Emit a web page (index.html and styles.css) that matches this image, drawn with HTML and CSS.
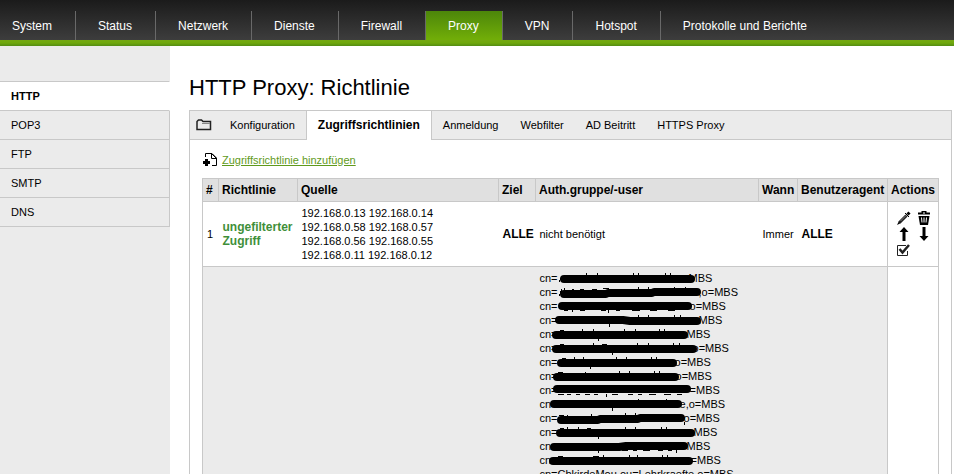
FILE: index.html
```html
<!DOCTYPE html>
<html lang="de">
<head>
    <meta charset="UTF-8">
    <title>HTTP Proxy: Richtlinie</title>
    <link rel="stylesheet" href="styles.css">
</head>
<body>
    <nav class="topnav">
        <a href="#">System</a>
        <a href="#">Status</a>
        <a href="#">Netzwerk</a>
        <a href="#">Dienste</a>
        <a href="#">Firewall</a>
        <a href="#" class="active">Proxy</a>
        <a href="#">VPN</a>
        <a href="#">Hotspot</a>
        <a href="#">Protokolle und Berichte</a>
    </nav>

    <div class="page">
        <nav class="sidebar">
            <a href="#" class="active">HTTP</a>
            <a href="#">POP3</a>
            <a href="#">FTP</a>
            <a href="#">SMTP</a>
            <a href="#">DNS</a>
        </nav>

        <main class="content">
            <h1>HTTP Proxy: Richtlinie</h1>

            <div class="tabs">
                <svg class="folder" width="16" height="12" viewBox="0 0 16 12"><path d="M1 10.500V2.500L2.500 1h3L7 2.500h7.500v8z" fill="none" stroke="#222" stroke-width="1.500"/><path d="M6 4.500h8" stroke="#888"/></svg>
                <a href="#">Konfiguration</a>
                <a href="#" class="active">Zugriffsrichtlinien</a>
                <a href="#">Anmeldung</a>
                <a href="#">Webfilter</a>
                <a href="#">AD Beitritt</a>
                <a href="#">HTTPS Proxy</a>
            </div>

            <div class="panel">
                <a href="#" class="add">
                    <svg width="16" height="15" viewBox="0 0 16 15"><path d="M3.500 5V1.500H10L14.500 6v7.500H10" fill="none" stroke="#000"/><path d="M9.500 1v5.500H15M10 2l4 4" fill="none" stroke="#000"/><path d="M4.500 7v7M1 10.500h7" stroke="#000" stroke-width="3"/></svg>
                    <span>Zugriffsrichtlinie hinzufügen</span>
                </a>

                <table class="rules">
                    <colgroup>
                        <col class="c-num"><col class="c-rule"><col class="c-source"><col class="c-target">
                        <col><col class="c-when"><col class="c-agent"><col class="c-actions">
                    </colgroup>
                    <thead>
                        <tr>
                            <th>#</th><th>Richtlinie</th><th>Quelle</th><th>Ziel</th>
                            <th>Auth.gruppe/-user</th><th>Wann</th><th>Benutzeragent</th><th>Actions</th>
                        </tr>
                    </thead>
                    <tbody>
                        <tr>
                            <td>1</td>
                            <td class="allow">ungefilterter Zugriff</td>
                            <td>192.168.0.13 192.168.0.14<br>192.168.0.58 192.168.0.57<br>192.168.0.56 192.168.0.55<br>192.168.0.11 192.168.0.12</td>
                            <td><b>ALLE</b></td>
                            <td>nicht benötigt</td>
                            <td>Immer</td>
                            <td><b>ALLE</b></td>
                            <td class="actions">
                                <div class="buttons">
                                    <button type="button" aria-label="Bearbeiten"><svg width="16" height="16" viewBox="0 0 16 16"><path d="M1 15l2-4 2 2z"/><path d="M3.500 12.500L10.500 5.500" stroke="#222" stroke-width="3"/><path d="M4.500 11L10 5.500" stroke="#aaa" stroke-width=".7"/><path d="M11.500 4.500l2-2" stroke="#000" stroke-width="3"/><path d="M9 3l4 4" stroke="#000"/></svg></button>
                                    <button type="button" aria-label="Löschen"><svg width="16" height="16" viewBox="0 0 16 16"><path d="M2 2.500h3.500V1h5v1.500H14v2H2z"/><path d="M2.500 6h11L12 15H4z"/><path d="M7 3h2" stroke="#fff"/><path d="M5.500 7.500l.5 5M8 7.500v5M10.500 7.500l-.5 5" stroke="#fff"/></svg></button>
                                    <button type="button" aria-label="Nach oben"><svg width="16" height="16" viewBox="0 0 16 16"><path d="M8 1l4.500 5H9.500v9h-3V6h-3z"/></svg></button>
                                    <button type="button" aria-label="Nach unten"><svg width="16" height="16" viewBox="0 0 16 16"><path d="M8 15l4.500-5H9.500V1h-3v9h-3z"/></svg></button>
                                    <button type="button" aria-label="Aktiviert"><svg width="16" height="16" viewBox="0 0 16 16"><path d="M10 3.500H1.500v10h10V9" fill="none" stroke="#222"/><path d="M3.500 7L6.500 10.500L13 3" fill="none" stroke="#222" stroke-width="2.500"/></svg></button>
                                </div>
                            </td>
                        </tr>
                        <tr class="off">
                            <td></td>
                            <td></td>
                            <td></td>
                            <td></td>
                            <td>
                                <div class="member">cn=<svg style="width:131px"><path d="M6 8H133"/><path class="tick" d="M1 11l2-4M28 2v3M39 2v3M75 2v3M80 2v3M107 2v3M112 2v3"/></svg>MBS</div>
                                <div class="member">cn=<svg style="width:141px"><path d="M6 9H48L50 8H94L96 7H139"/><path class="tick" d="M1 11l3-7M6 3v3M14 4h2M22 4h4M34 4h5M45 3h6M80 2v3M90 2v3M116 2v3M127 2v3"/></svg>,o=MBS</div>
                                <div class="member">cn=<svg style="width:132px"><path d="M4 7H130"/><path class="tick" d="M6 11h4M14 11v2M22 11h5M43 11h5M50 11v3M58 11h4M74 11h8M92 11h7M110 11h7"/></svg>o=MBS</div>
                                <div class="member">cn=<svg style="width:141px"><path d="M1 7H65L72 8H139"/><path class="tick" d="M51 11v3M80 2v3M90 2v3M116 2v3M122 2v3"/></svg>MBS</div>
                                <div class="member">cn=<svg style="width:129px"><path d="M-2 8H126"/><path class="tick" d="M2 3h4M24 2v3M35 2v3M66 2v3M77 2v3M101 2v3M106 2v3M40 12v2"/></svg>MBS</div>
                                <div class="member">cn=<svg style="width:135px"><path d="M-2 8H135"/><path class="tick" d="M2 3h4M35 2v3M44 3h5M79 2v3M90 2v3M115 2v3M121 2v3M54 12v2"/></svg>o=MBS</div>
                                <div class="member">cn=<svg style="width:117px"><path d="M3 8H115"/><path class="tick" d="M4 3h4M16 2v3M25 2v3M58 2v3M68 2v3M93 2v3M98 2v3M32 12v2"/></svg>o=MBS</div>
                                <div class="member">cn=<svg style="width:118px"><path d="M-1 8H117"/><path class="tick" d="M0 3h5M27 3v2M61 2v3M71 2v3M96 2v3M101 2v3"/></svg>o=MBS</div>
                                <div class="member">cn=<svg style="width:132px"><path d="M-1 6H129"/><path class="tick" d="M0 11h6M9 11h4M18 11h4M27 11h5M36 11h4M48 11v3M54 11h6M70 11h5M80 11h4M91 11h7M106 11h7M119 11h5"/></svg>=MBS</div>
                                <div class="member">cn=<svg style="width:122px"><path d="M-4 7H120"/><path class="tick" d="M54 11v3M80 2v2M108 2v2"/></svg>e,o=MBS</div>
                                <div class="member">cn=<svg style="width:126px"><path d="M3 9H40L42 8H80L82 7H123"/><path class="tick" d="M1 4h5M9 4v2M33 3v3M67 2v3M77 2v2M126 11v3"/></svg>o=MBS</div>
                                <div class="member">cn=<svg style="width:136px"><path d="M2 8H133"/><path class="tick" d="M2 3h4M9 2v3M20 2v3M29 3h4M67 2v3M77 2v3M103 2v3M108 2v3M40 12v2"/></svg>MBS</div>
                                <div class="member">cn=<svg style="width:129px"><path d="M-4 8H61L68 7H126"/><path class="tick" d="M40 11v3M64 11h6M75 11h4M85 11h7M100 11h5M110 11h4M118 11v3"/></svg>MBS</div>
                                <div class="member">cn=<svg style="width:133px"><path d="M-5 8H131"/><path class="tick" d="M0 3h5M35 3h6M45 2v3M71 2v3M79 2v3M104 2v3M109 2v3"/></svg>=MBS</div>
                                <div class="member">cn=CbkirdeMou,ou=Lehrkraefte,o=MBS</div>
                            </td>
                            <td></td>
                            <td></td>
                            <td class="actions"></td>
                        </tr>
                    </tbody>
                </table>
            </div>
        </main>
    </div>
</body>
</html>
```
FILE: styles.css
```css
body {
    margin: 0;
    height: 100vh;
    overflow: hidden;
    display: flex;
    flex-direction: column;
    background-color: #fff;
    color: #000;
    font-family: "Liberation Sans", Arial, sans-serif;
    font-size: 11px;
    line-height: 14px;
}

a {
    color: inherit;
    text-decoration: none;
}

/* Hauptnavigation */
.topnav {
    display: flex;
    flex-shrink: 0;
    padding-top: 11px;
    background: linear-gradient(#1b1b1b, #3d3d3d 40px, #74a812 40px, #6fa80c 43px, #548c14);
    height: 35px;
    color: #fff;
    font-size: 12px;
}

.topnav a {
    height: 29px;
    line-height: 30px;
    padding: 0 23px 0 22px;
    border-right: 1px solid #696969;
    white-space: nowrap;
}

.topnav a:first-child {
    padding-left: 12px;
}

.topnav a:last-child {
    border-right: none;
}

.topnav a.active {
    background: linear-gradient(#4c860a, #72ae08);
}

.page {
    flex: 1;
    display: flex;
    align-items: stretch;
}

.sidebar {
    width: 170px;
    flex-shrink: 0;
    padding-top: 35px;
    background-color: #ebebeb;
}

.sidebar a {
    display: block;
    line-height: 28px;
    padding-left: 11px;
    border-bottom: 1px solid #c8c8c8;
    border-right: 1px solid #c8c8c8;
}

.sidebar a.active {
    background-color: #fff;
    border-top: 1px solid #c8c8c8;
    border-right-color: #fff;
    font-weight: bold;
}

.content {
    flex: 1;
    min-width: 0;
    padding: 0 2px 0 19px;
}

h1 {
    margin: 0;
    padding: 29px 0 9px;
    font-size: 22px;
    line-height: 26px;
    font-weight: normal;
}

.tabs {
    display: flex;
    align-items: center;
    height: 28px;
    border: 1px solid #c8c8c8;
    background-color: #ebebeb;
}

.tabs a {
    padding: 0 11px;
    line-height: 30px;
}

.tabs .folder {
    margin: 0 7px 0 6px;
}

.tabs a.active {
    height: 29px;
    margin-bottom: -1px;
    line-height: 28px;
    background-color: #fff;
    border-left: 1px solid #c8c8c8;
    border-right: 1px solid #c8c8c8;
    font-size: 12px;
    font-weight: bold;
}

.panel {
    border: 1px solid #c8c8c8;
    border-top: none;
    padding: 12px 12px 40px;
}

.add {
    display: flex;
    align-items: center;
    gap: 4px;
    margin-bottom: 11px;
    color: #5f9a1c;
}

.add span {
    text-decoration: underline;
}

/* Regeltabelle */
.rules {
    width: 100%;
    table-layout: fixed;
    border-collapse: collapse;
    border: 1px solid #c8c8c8;
}

.c-num { width: 16px; }
.c-rule { width: 79px; }
.c-source { width: 201px; }
.c-target { width: 37px; }
.c-when { width: 39px; }
.c-agent { width: 90px; }
.c-actions { width: 51px; }

.rules th {
    padding: 4px 3px;
    border: 1px solid #c8c8c8;
    background-color: #e0e0e0;
    font-size: 12px;
    text-align: left;
    line-height: 14px;
    white-space: nowrap;
}

.rules td {
    padding: 4px;
    border-bottom: 1px solid #c8c8c8;
}

.rules b,
.rules .allow {
    font-size: 12px;
    font-weight: bold;
}

.rules .allow {
    color: #3f8f3a;
}

.rules .off td {
    background-color: #ebebeb;
}

.rules td.actions {
    border-left: 1px solid #c8c8c8;
    background-color: #fff;
}

.buttons {
    display: grid;
    grid-template-columns: 20px 20px;
    grid-auto-rows: 16px;
    justify-content: end;
}

.buttons button {
    padding: 0;
    border: none;
    background: none;
    cursor: pointer;
}

.buttons svg {
    display: block;
    margin: auto;
}

/* geschwärzte Benutzernamen */
.member {
    display: flex;
    height: 14px;
    white-space: nowrap;
}

.member svg {
    height: 14px;
    overflow: visible;
    fill: none;
    stroke: #000;
    stroke-width: 8;
    stroke-linecap: round;
    stroke-linejoin: round;
}

.member svg .tick {
    stroke-width: 1;
    stroke-linecap: butt;
    shape-rendering: crispEdges;
}
```
